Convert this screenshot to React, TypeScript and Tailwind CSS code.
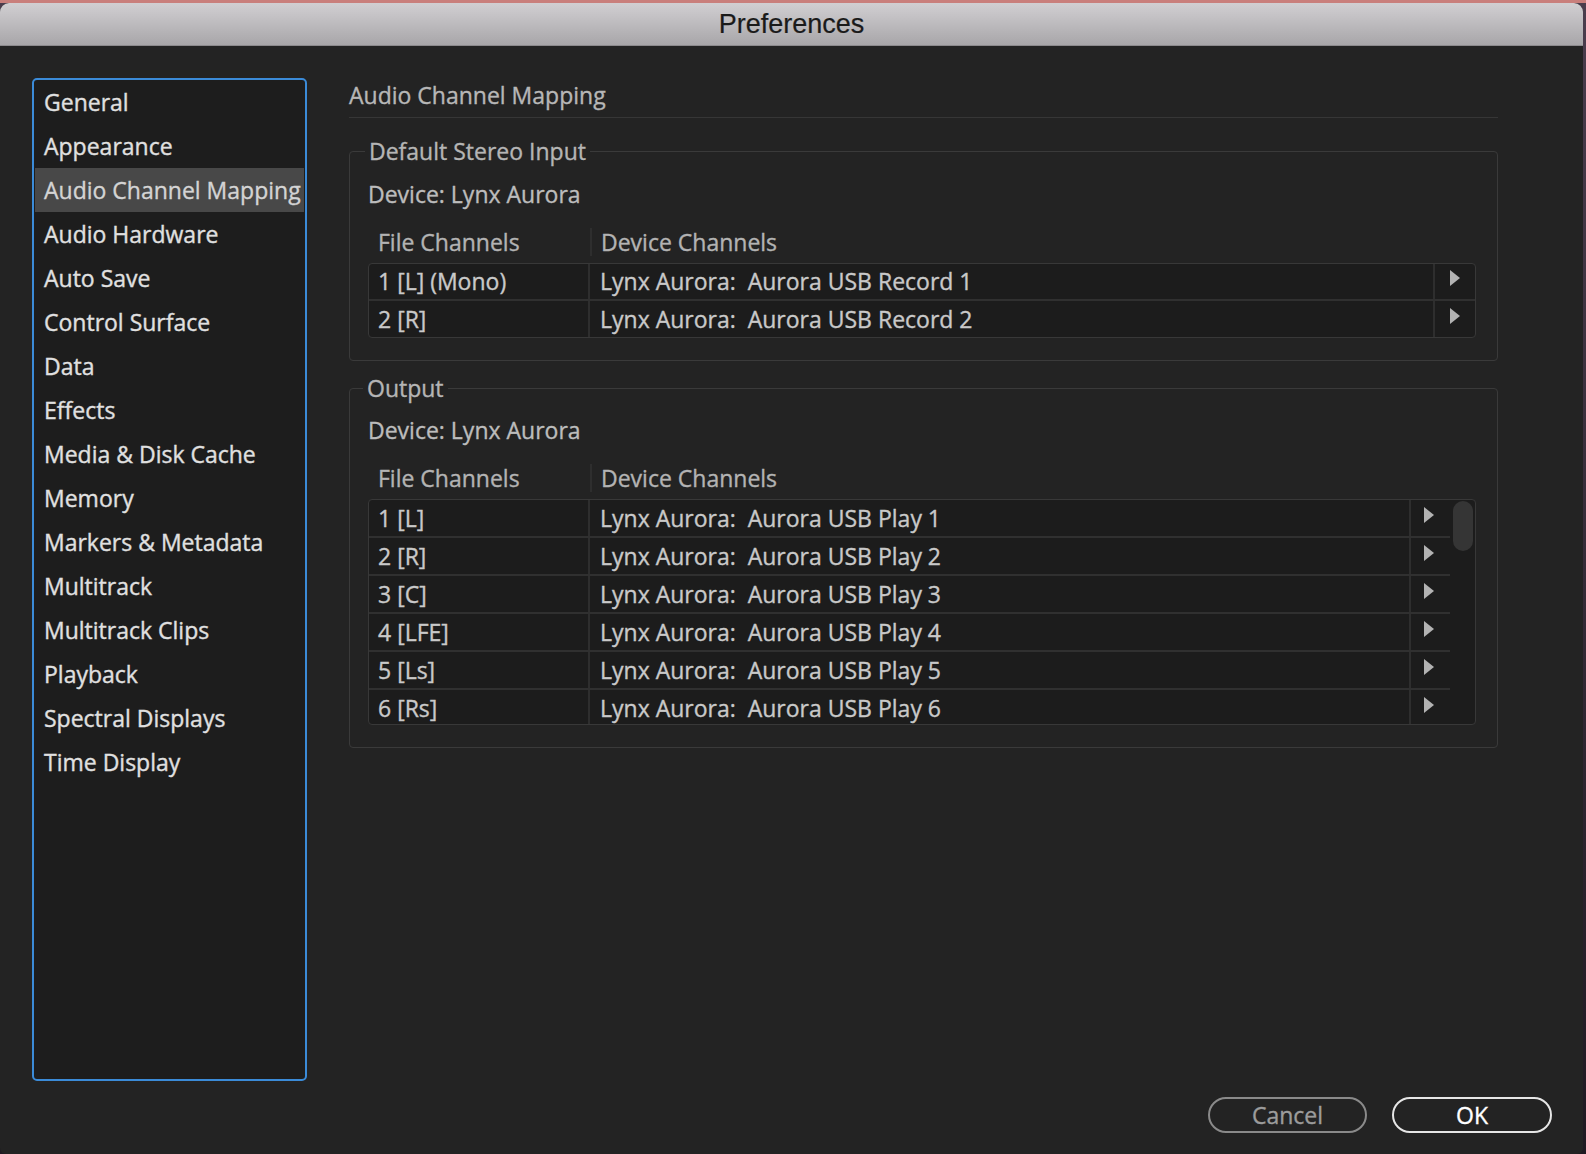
import React from "react";

const sidebarItems = [
  "General",
  "Appearance",
  "Audio Channel Mapping",
  "Audio Hardware",
  "Auto Save",
  "Control Surface",
  "Data",
  "Effects",
  "Media & Disk Cache",
  "Memory",
  "Markers & Metadata",
  "Multitrack",
  "Multitrack Clips",
  "Playback",
  "Spectral Displays",
  "Time Display",
];

const inputRows = [
  ["1 [L] (Mono)", "Aurora USB Record 1"],
  ["2 [R]", "Aurora USB Record 2"],
];

const outputRows = [
  ["1 [L]", "Aurora USB Play 1"],
  ["2 [R]", "Aurora USB Play 2"],
  ["3 [C]", "Aurora USB Play 3"],
  ["4 [LFE]", "Aurora USB Play 4"],
  ["5 [Ls]", "Aurora USB Play 5"],
  ["6 [Rs]", "Aurora USB Play 6"],
];

const Arrow = () => (
  <svg width="10" height="16" viewBox="0 0 10 16" className="-mt-[6px]">
    <polygon points="0,0 10,8 0,16" fill="#b3b3b3" />
  </svg>
);

const HeaderRow = () => (
  <div className="flex h-[36px] items-start text-[#b3b3b3]">
    <div className="w-[222px] pl-[10px] leading-[30px]">File Channels</div>
    <div className="mt-[1px] h-[28px] border-l-2 border-[#2e2e2e] pl-[9px] leading-[28px]">
      Device Channels
    </div>
  </div>
);

const Row = ({ a, b }: { a: string; b: string }) => (
  <div className="flex h-[38px] shrink-0 border-b-2 border-[#303030] text-[#c9c9c9]">
    <div className="flex w-[221px] items-center border-r-2 border-[#2e2e2e] pl-[9px]">{a}</div>
    <div className="flex flex-1 items-center whitespace-pre pl-[10px]">{"Lynx Aurora:  " + b}</div>
    <div className="flex w-[41px] items-center justify-center border-l-2 border-[#2e2e2e] pr-[3px]">
      <Arrow />
    </div>
  </div>
);

export default function App() {
  return (
    <div
      className="h-[1154px] w-[1586px] overflow-hidden bg-[linear-gradient(to_bottom,#c97f7c_0px,#c97f7c_3px,#4a3d4d_3px,#1f1a22_100%)] pt-[3px]"
      style={{ fontFamily: '"Open Sans", "Noto Sans", sans-serif' }}
    >
      <div className="flex h-[1151px] w-[1583px] flex-col overflow-hidden rounded-t-[9px] rounded-b-[6px] bg-[#232323] text-[23px] [-webkit-text-stroke:0.35px_currentColor]">
        {/* Title bar */}
        <div
          className="flex h-[43px] shrink-0 items-center justify-center border-b border-[#8c8a8d] bg-[linear-gradient(to_bottom,#d1cfd2,#a8a6a9)] text-[27px] text-[#1a1a1a] [-webkit-text-stroke:0.2px_currentColor]"
          style={{ fontFamily: '"Liberation Sans", Arial, sans-serif' }}
        >
          Preferences
        </div>

        {/* Body */}
        <div className="flex flex-1 flex-col">
          <div className="flex pl-[32px] pt-[32px]">
            {/* Sidebar */}
            <div className="h-[1003px] w-[275px] shrink-0 rounded-[5px] border-2 border-[#3b8bd8] bg-[#1d1d1d]">
              {sidebarItems.map((item, i) => (
                <div
                  key={item}
                  className={
                    "mx-[1px] flex h-[44px] items-center whitespace-nowrap pl-[9px] " +
                    (i === 2 ? "bg-[#484848] text-[#d4d4d4]" : "text-[#e0e0e0]")
                  }
                >
                  {item}
                </div>
              ))}
            </div>

            {/* Content */}
            <div className="ml-[42px] mt-[2px] w-[1149px]">
              <div className="border-b border-[#363636] pb-[7px] leading-[30px] text-[#b7b7b7]">
                Audio Channel Mapping
              </div>

              {/* Default Stereo Input */}
              <fieldset className="mt-[18px] rounded-[4px] border border-[#3a3a3a] pb-[22px] pl-[18px] pr-[21px]">
                <legend className="-ml-[3px] px-[4px] leading-[30px] text-[#b5b5b5]">
                  Default Stereo Input
                </legend>
                <div className="mt-[13px] leading-[30px] text-[#bcbcbc]">Device: Lynx Aurora</div>
                <div className="mt-[18px]">
                  <HeaderRow />
                </div>
                <div className="overflow-hidden rounded-[4px] border border-[#383838] bg-[#1c1c1c]">
                  {inputRows.map((r, i) => (
                    <div
                      key={i}
                      className={
                        "flex h-[36.5px] text-[#c9c9c9] " +
                        (i === 0 ? "border-b-2 border-[#303030]" : "")
                      }
                    >
                      <div className="flex w-[221px] items-center border-r-2 border-[#2e2e2e] pl-[9px]">
                        {r[0]}
                      </div>
                      <div className="flex flex-1 items-center whitespace-pre pl-[10px]">
                        {"Lynx Aurora:  " + r[1]}
                      </div>
                      <div className="flex w-[42px] items-center justify-center border-l-2 border-[#2e2e2e]">
                        <Arrow />
                      </div>
                    </div>
                  ))}
                </div>
              </fieldset>

              {/* Output */}
              <fieldset className="mt-[12px] rounded-[4px] border border-[#3a3a3a] pb-[22px] pl-[18px] pr-[21px]">
                <legend className="-ml-[5px] px-[4px] leading-[30px] text-[#b5b5b5]">Output</legend>
                <div className="mt-[12px] leading-[30px] text-[#bcbcbc]">Device: Lynx Aurora</div>
                <div className="mt-[18px]">
                  <HeaderRow />
                </div>
                <div className="flex h-[226px] overflow-hidden rounded-[4px] border border-[#383838] bg-[#1c1c1c]">
                  <div className="flex flex-1 flex-col overflow-hidden">
                    {outputRows.map((r, i) => (
                      <Row key={i} a={r[0]} b={r[1]} />
                    ))}
                  </div>
                  <div className="w-[25px] shrink-0 pl-[3px] pt-[1px]">
                    <div className="h-[50px] w-[20px] rounded-full bg-[#353535]" />
                  </div>
                </div>
              </fieldset>
            </div>
          </div>

          {/* Buttons */}
          <div className="mt-[16px] flex justify-end gap-[25px] pr-[31px]">
            <button className="flex h-[36px] w-[159px] items-center justify-center rounded-full border-2 border-[#8a8a8a] text-[#9c9c9c]">
              Cancel
            </button>
            <button className="flex h-[36px] w-[160px] items-center justify-center rounded-full border-2 border-[#e6e6e6] text-white">
              OK
            </button>
          </div>
        </div>
      </div>
    </div>
  );
}
